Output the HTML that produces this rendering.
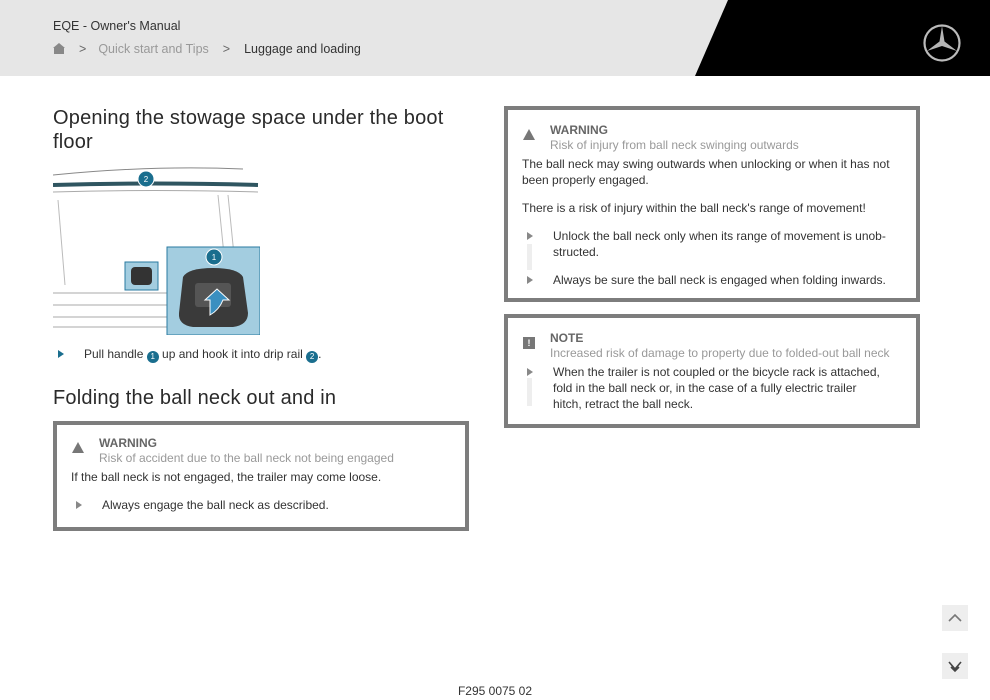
<!DOCTYPE html>
<html><head><meta charset="utf-8"><style>
*{margin:0;padding:0;box-sizing:border-box}
body{width:990px;height:700px;background:#fff;font-family:"Liberation Sans",sans-serif;color:#333;position:relative;overflow:hidden}
.hdr{position:absolute;left:0;top:0;width:990px;height:76px;background:#e6e6e6}
.blk{position:absolute;left:0;top:0;width:990px;height:76px;background:#000;clip-path:polygon(728px 0,990px 0,990px 76px,695px 76px)}
.t1{position:absolute;left:53px;top:19px;font-size:12.5px;color:#333}
.bc{position:absolute;left:53px;top:42px;font-size:12.5px;color:#999}
.abs{position:absolute}
h1{position:absolute;font-weight:normal;font-size:20px;letter-spacing:0.2px;color:#2a2a2a;line-height:24px;left:53px}
.box{position:absolute;border:4px solid #7d7d7d;background:#fff}
.box p{font-size:12px;line-height:16px;color:#333}
.ttl{font-size:12px;font-weight:bold;color:#666}
.sub{font-size:12px;color:#999}
.li{position:relative;padding-left:31px;font-size:12px;line-height:16px;color:#333}
.li:before{content:"";position:absolute;left:5px;top:4px;border-left:6px solid #888;border-top:4px solid transparent;border-bottom:4px solid transparent}
.bar{position:absolute;left:5px;top:16px;width:5px;background:#eee}
.num{display:inline-block;width:12px;height:12px;border-radius:50%;background:#1a6e8e;color:#fff;font-size:8px;text-align:center;line-height:12px;vertical-align:-1px}
</style></head><body>
<div class="hdr"></div><div class="blk"></div>
<svg class="abs" style="left:922px;top:23px" width="40" height="40" viewBox="0 0 40 40"><circle cx="20" cy="20" r="17.5" fill="none" stroke="#bbb" stroke-width="2.2"/><path d="M20 3 L22.5 18.5 L35 28 L20 23 L5 28 L17.5 18.5 Z" fill="#b5b5b5"/></svg>
<div class="t1">EQE - Owner's Manual</div>
<div class="bc"><svg width="12" height="11" viewBox="0 0 12 11" style="vertical-align:-1px"><path d="M6 0 L12 5 L11 5 L11 11 L1 11 L1 5 L0 5Z" fill="#888"/></svg><span style="margin:0 12px 0 14px;color:#666">&gt;</span>Quick start and Tips<span style="margin:0 14px;color:#666">&gt;</span><span style="color:#333">Luggage and loading</span></div>

<h1 style="top:106px">Opening the stowage space under the boot<br>floor</h1>
<svg class="abs" style="left:53px;top:165px" width="207" height="170" viewBox="0 0 207 170">
<rect width="207" height="170" fill="#fff"/>
<path d="M0 10 Q100 0 190 4" stroke="#888" fill="none"/>
<path d="M0 20 Q100 17 205 20" stroke="#2f5560" stroke-width="4" fill="none"/>
<path d="M0 27 Q100 24 205 27" stroke="#aaa" fill="none"/>
<path d="M5 35 L12 120 M165 30 L172 100 M175 30 L182 100" stroke="#bbb" fill="none"/>
<path d="M0 128 L115 128 M0 140 L115 140 M0 152 L115 152 M0 162 L115 162" stroke="#aaa" fill="none"/>
<rect x="72" y="97" width="33" height="28" fill="#a3cde0" stroke="#2a7aa0"/>
<rect x="78" y="102" width="21" height="18" rx="4" fill="#333"/>
<rect x="114" y="82" width="93" height="88" fill="#a3cde0" stroke="#2a7aa0"/>
<path d="M130 112 Q135 103 160 103 Q185 103 190 112 L195 148 Q195 160 180 162 L140 162 Q125 160 126 148Z" fill="#3a3a3a"/>
<rect x="142" y="118" width="36" height="24" rx="3" fill="#555"/>
<path d="M157 150 L157 135 L152 135 L164 124 L176 135 L170 135 Q166 145 157 150Z" fill="#3a8fc0" stroke="#fff" stroke-width="1"/>
<line x1="161" y1="100" x2="161" y2="92" stroke="#1a6e8e"/>
<circle cx="161" cy="92" r="8" fill="#1a6e8e" stroke="#fff"/><text x="161" y="95" font-size="8" fill="#fff" text-anchor="middle" font-family="Liberation Sans">1</text>
<line x1="93" y1="22" x2="93" y2="14" stroke="#1a6e8e"/>
<circle cx="93" cy="14" r="8" fill="#1a6e8e" stroke="#fff"/><text x="93" y="17" font-size="8" fill="#fff" text-anchor="middle" font-family="Liberation Sans">2</text>
</svg>
<div class="li abs" style="left:53px;top:346px;width:400px">Pull handle <span class="num">1</span> up and hook it into drip rail <span class="num">2</span>.</div>
<style>.abs.li:before{border-left-color:#1a6e8e}</style>

<h1 style="top:386px">Folding the ball neck out and in</h1>
<div class="box" style="left:53px;top:421px;width:416px;height:110px;padding:11px 14px">
<svg class="abs" style="left:15px;top:17px" width="12" height="11"><path d="M6 0 L12 11 L0 11Z" fill="#777"/></svg>
<div style="padding-left:28px"><div class="ttl">WARNING</div><div class="sub" style="margin-top:1px">Risk of accident due to the ball neck not being engaged</div></div>
<p style="margin-top:4px">If the ball neck is not engaged, the trailer may come loose.</p>
<div class="li" style="margin-top:12px">Always engage the ball neck as described.</div>
</div>

<div class="box" style="left:504px;top:106px;width:416px;height:196px;padding:13px 14px">
<svg class="abs" style="left:15px;top:19px" width="12" height="11"><path d="M6 0 L12 11 L0 11Z" fill="#777"/></svg>
<div style="padding-left:28px"><div class="ttl">WARNING</div><div class="sub" style="margin-top:1px">Risk of injury from ball neck swinging outwards</div></div>
<p style="margin-top:4px">The ball neck may swing outwards when unlocking or when it has not<br>been properly engaged.</p>
<p style="margin-top:12px">There is a risk of injury within the ball neck's range of movement!</p>
<div class="li" style="margin-top:12px"><div class="bar" style="height:26px"></div>Unlock the ball neck only when its range of movement is unob-<br>structed.</div>
<div class="li" style="margin-top:12px">Always be sure the ball neck is engaged when folding inwards.</div>
</div>

<div class="box" style="left:504px;top:314px;width:416px;height:114px;padding:13px 14px">
<div class="abs" style="left:15px;top:19px;width:12px;height:12px;background:#777;color:#fff;font-size:9px;font-weight:bold;text-align:center;line-height:12px">!</div>
<div style="padding-left:28px"><div class="ttl">NOTE</div><div class="sub" style="margin-top:1px">Increased risk of damage to property due to folded-out ball neck</div></div>
<div class="li" style="margin-top:4px"><div class="bar" style="height:28px;top:14px"></div>When the trailer is not coupled or the bicycle rack is attached,<br>fold in the ball neck or, in the case of a fully electric trailer<br>hitch, retract the ball neck.</div>
</div>

<div class="abs" style="left:942px;top:605px;width:26px;height:26px;background:#eee"><svg width="26" height="26"><path d="M7 16 L13 10 L19 16" stroke="#777" stroke-width="1.6" fill="none"/></svg></div>
<div class="abs" style="left:942px;top:653px;width:26px;height:26px;background:#eee"><svg width="26" height="26"><path d="M7 9 L13 16 L19 9 M9 14 L13 18 L17 14" stroke="#444" stroke-width="1.6" fill="none"/></svg></div>
<div class="abs" style="left:0;width:990px;text-align:center;top:684px;font-size:12px;color:#333">F295 0075 02</div>
</body></html>
